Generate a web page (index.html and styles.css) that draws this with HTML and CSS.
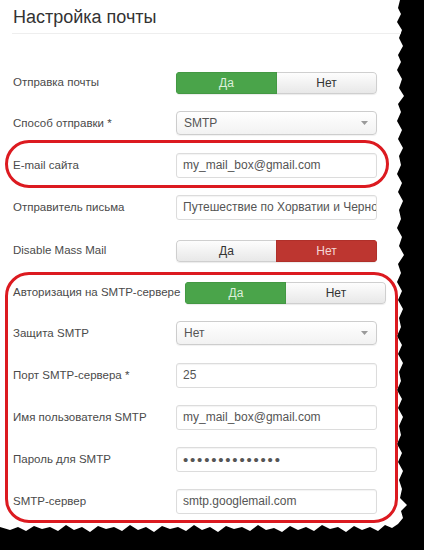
FILE: index.html
```html
<!DOCTYPE html>
<html lang="ru">
<head>
<meta charset="utf-8">
<title>Настройка почты</title>
<link rel="stylesheet" href="styles.css">
</head>
<body>
<div class="sheet">
  <h2 class="head">Настройка почты</h2>
  <div class="form">
    <div class="row trow">
      <div class="lbl">Отправка почты</div>
      <div class="toggle"><span class="opt yes">Да</span><span class="opt off">Нет</span></div>
    </div>
    <div class="row">
      <div class="lbl">Способ отправки *</div>
      <div class="sel"><span>SMTP</span><svg class="caret" width="7" height="4" viewBox="0 0 7 4"><path d="M0 0H7L3.5 4Z" fill="#9a9a9a"/></svg></div>
    </div>
    <div class="row">
      <div class="lbl">E-mail сайта</div>
      <div class="inp">my_mail_box@gmail.com</div>
    </div>
    <div class="row">
      <div class="lbl">Отправитель письма</div>
      <div class="inp">Путешествие по Хорватии и Черно</div>
    </div>
    <div class="row trow">
      <div class="lbl">Disable Mass Mail</div>
      <div class="toggle"><span class="opt off">Да</span><span class="opt no">Нет</span></div>
    </div>
    <div class="row trow">
      <div class="lbl">Авторизация на SMTP-сервере</div>
      <div class="toggle"><span class="opt yes">Да</span><span class="opt off">Нет</span></div>
    </div>
    <div class="row">
      <div class="lbl">Защита SMTP</div>
      <div class="sel"><span>Нет</span><svg class="caret" width="7" height="4" viewBox="0 0 7 4"><path d="M0 0H7L3.5 4Z" fill="#9a9a9a"/></svg></div>
    </div>
    <div class="row">
      <div class="lbl">Порт SMTP-сервера *</div>
      <div class="inp">25</div>
    </div>
    <div class="row">
      <div class="lbl">Имя пользователя SMTP</div>
      <div class="inp">my_mail_box@gmail.com</div>
    </div>
    <div class="row">
      <div class="lbl">Пароль для SMTP</div>
      <div class="inp"><span class="dots">••••••••••••••</span></div>
    </div>
    <div class="row">
      <div class="lbl">SMTP-сервер</div>
      <div class="inp">smtp.googlemail.com</div>
    </div>
  </div>
  <div class="mark mark-one"></div>
  <div class="mark mark-two"></div>
</div>
</body>
</html>
```

FILE: styles.css
```css
html, body {
  margin: 0;
  padding: 0;
}
body {
  background: #000;
  width: 424px;
  height: 550px;
  overflow: hidden;
  font-family: "Liberation Sans", Arial, sans-serif;
}
.sheet {
  position: relative;
  box-sizing: border-box;
  width: 412px;
  height: 540px;
  padding-left: 12px;
  background: #fff;
  clip-path: polygon(0 0, 400px 0, 398px 8px, 401px 14px, 397px 22px, 402px 30px, 399px 38px, 403px 46px, 398px 55px, 401px 62px, 397px 70px, 402px 79px, 399px 88px, 404px 96px, 398px 104px, 401px 112px, 397px 121px, 402px 130px, 398px 139px, 403px 148px, 399px 156px, 401px 165px, 397px 174px, 402px 183px, 398px 192px, 403px 201px, 399px 210px, 401px 219px, 397px 228px, 402px 237px, 399px 246px, 404px 255px, 398px 264px, 401px 273px, 397px 282px, 402px 291px, 398px 300px, 403px 309px, 399px 318px, 401px 327px, 397px 336px, 402px 345px, 398px 354px, 403px 363px, 399px 372px, 401px 381px, 397px 390px, 402px 399px, 398px 408px, 403px 417px, 399px 426px, 401px 435px, 397px 444px, 402px 453px, 398px 462px, 403px 471px, 399px 480px, 402px 489px, 400px 498px, 407px 505px, 401px 511px, 403px 518px, 398px 524px, 392px 528px, 385px 525px, 378px 531px, 370px 527px, 362px 530px, 354px 526px, 346px 532px, 338px 527px, 330px 529px, 322px 525px, 314px 531px, 306px 527px, 298px 530px, 290px 526px, 282px 532px, 274px 528px, 266px 530px, 258px 525px, 250px 531px, 242px 527px, 234px 529px, 226px 526px, 218px 532px, 210px 527px, 202px 530px, 194px 525px, 186px 531px, 178px 527px, 170px 529px, 162px 526px, 154px 532px, 146px 527px, 138px 530px, 130px 525px, 122px 531px, 114px 527px, 106px 529px, 98px 526px, 90px 532px, 82px 527px, 74px 530px, 66px 525px, 58px 531px, 50px 527px, 42px 529px, 34px 526px, 26px 531px, 18px 527px, 10px 530px, 0 527px);
}
.head {
  margin: 0;
  padding: 6px 0 5px 1px;
  font-size: 18px;
  line-height: 22px;
  font-weight: normal;
  color: #333;
  border-bottom: 1px solid #eee;
}
.form {
  display: flex;
  flex-direction: column;
  padding-top: 35px;
}
.row {
  display: flex;
  align-items: center;
  height: 24px;
  margin-bottom: 18px;
}
.row.trow {
  height: 22px;
  margin-top: 3px;
  margin-bottom: 17px;
}
.row.trow .lbl {
  margin-top: -3px;
}
.lbl {
  flex: 0 0 auto;
  min-width: 158px;
  margin-left: 1px;
  margin-right: 5px;
  font-size: 11.5px;
  color: #4a4a4a;
  white-space: nowrap;
}
.toggle {
  display: flex;
  width: 201px;
  height: 22px;
  box-sizing: border-box;
  border-radius: 4px;
  overflow: hidden;
  box-shadow: 0 1px 1px rgba(0, 0, 0, 0.08);
}
.opt {
  flex: 1 1 0;
  display: flex;
  align-items: center;
  justify-content: center;
  box-sizing: border-box;
  font-size: 12px;
}
.opt.off {
  color: #333;
  background: linear-gradient(#fdfdfd, #e8e8e8);
  border: 1px solid #cfcfcf;
}
.opt.off:first-child {
  border-right: none;
  border-radius: 4px 0 0 4px;
}
.opt.off:last-child {
  border-left: none;
  border-radius: 0 4px 4px 0;
}
.opt.yes {
  color: #dcefdc;
  background: #4aa44a;
  border: 1px solid #439843;
}
.opt.no {
  color: #f4d6d5;
  background: #bd3630;
  border: 1px solid #b0302a;
}
.sel {
  display: flex;
  align-items: center;
  justify-content: space-between;
  box-sizing: border-box;
  width: 201px;
  height: 24px;
  padding: 0 8px 0 7px;
  border: 1px solid #cdcdcd;
  border-radius: 4px;
  background: linear-gradient(#ffffff, #f2f2f2);
  box-shadow: 0 1px 1px rgba(0, 0, 0, 0.06);
  font-size: 12px;
  color: #555;
}
.caret {
  display: block;
}
.inp {
  display: flex;
  align-items: center;
  box-sizing: border-box;
  width: 201px;
  height: 25px;
  padding: 0 6px;
  border: 1px solid #dcdcdc;
  border-radius: 3px;
  background: #fff;
  box-shadow: inset 0 1px 1px rgba(0, 0, 0, 0.05);
  font-size: 12px;
  color: #555;
  white-space: nowrap;
  overflow: hidden;
}
.dots {
  font-size: 15px;
  letter-spacing: 1.8px;
  color: #555;
  line-height: 1;
}
.mark {
  position: absolute;
  box-sizing: border-box;
  border: 3px solid #dc1a20;
  pointer-events: none;
}
.mark-one {
  left: 5px;
  top: 140px;
  width: 384px;
  height: 48px;
  border-radius: 24px;
}
.mark-two {
  left: 5px;
  top: 272px;
  width: 393px;
  height: 251px;
  border-radius: 24px;
}
```
